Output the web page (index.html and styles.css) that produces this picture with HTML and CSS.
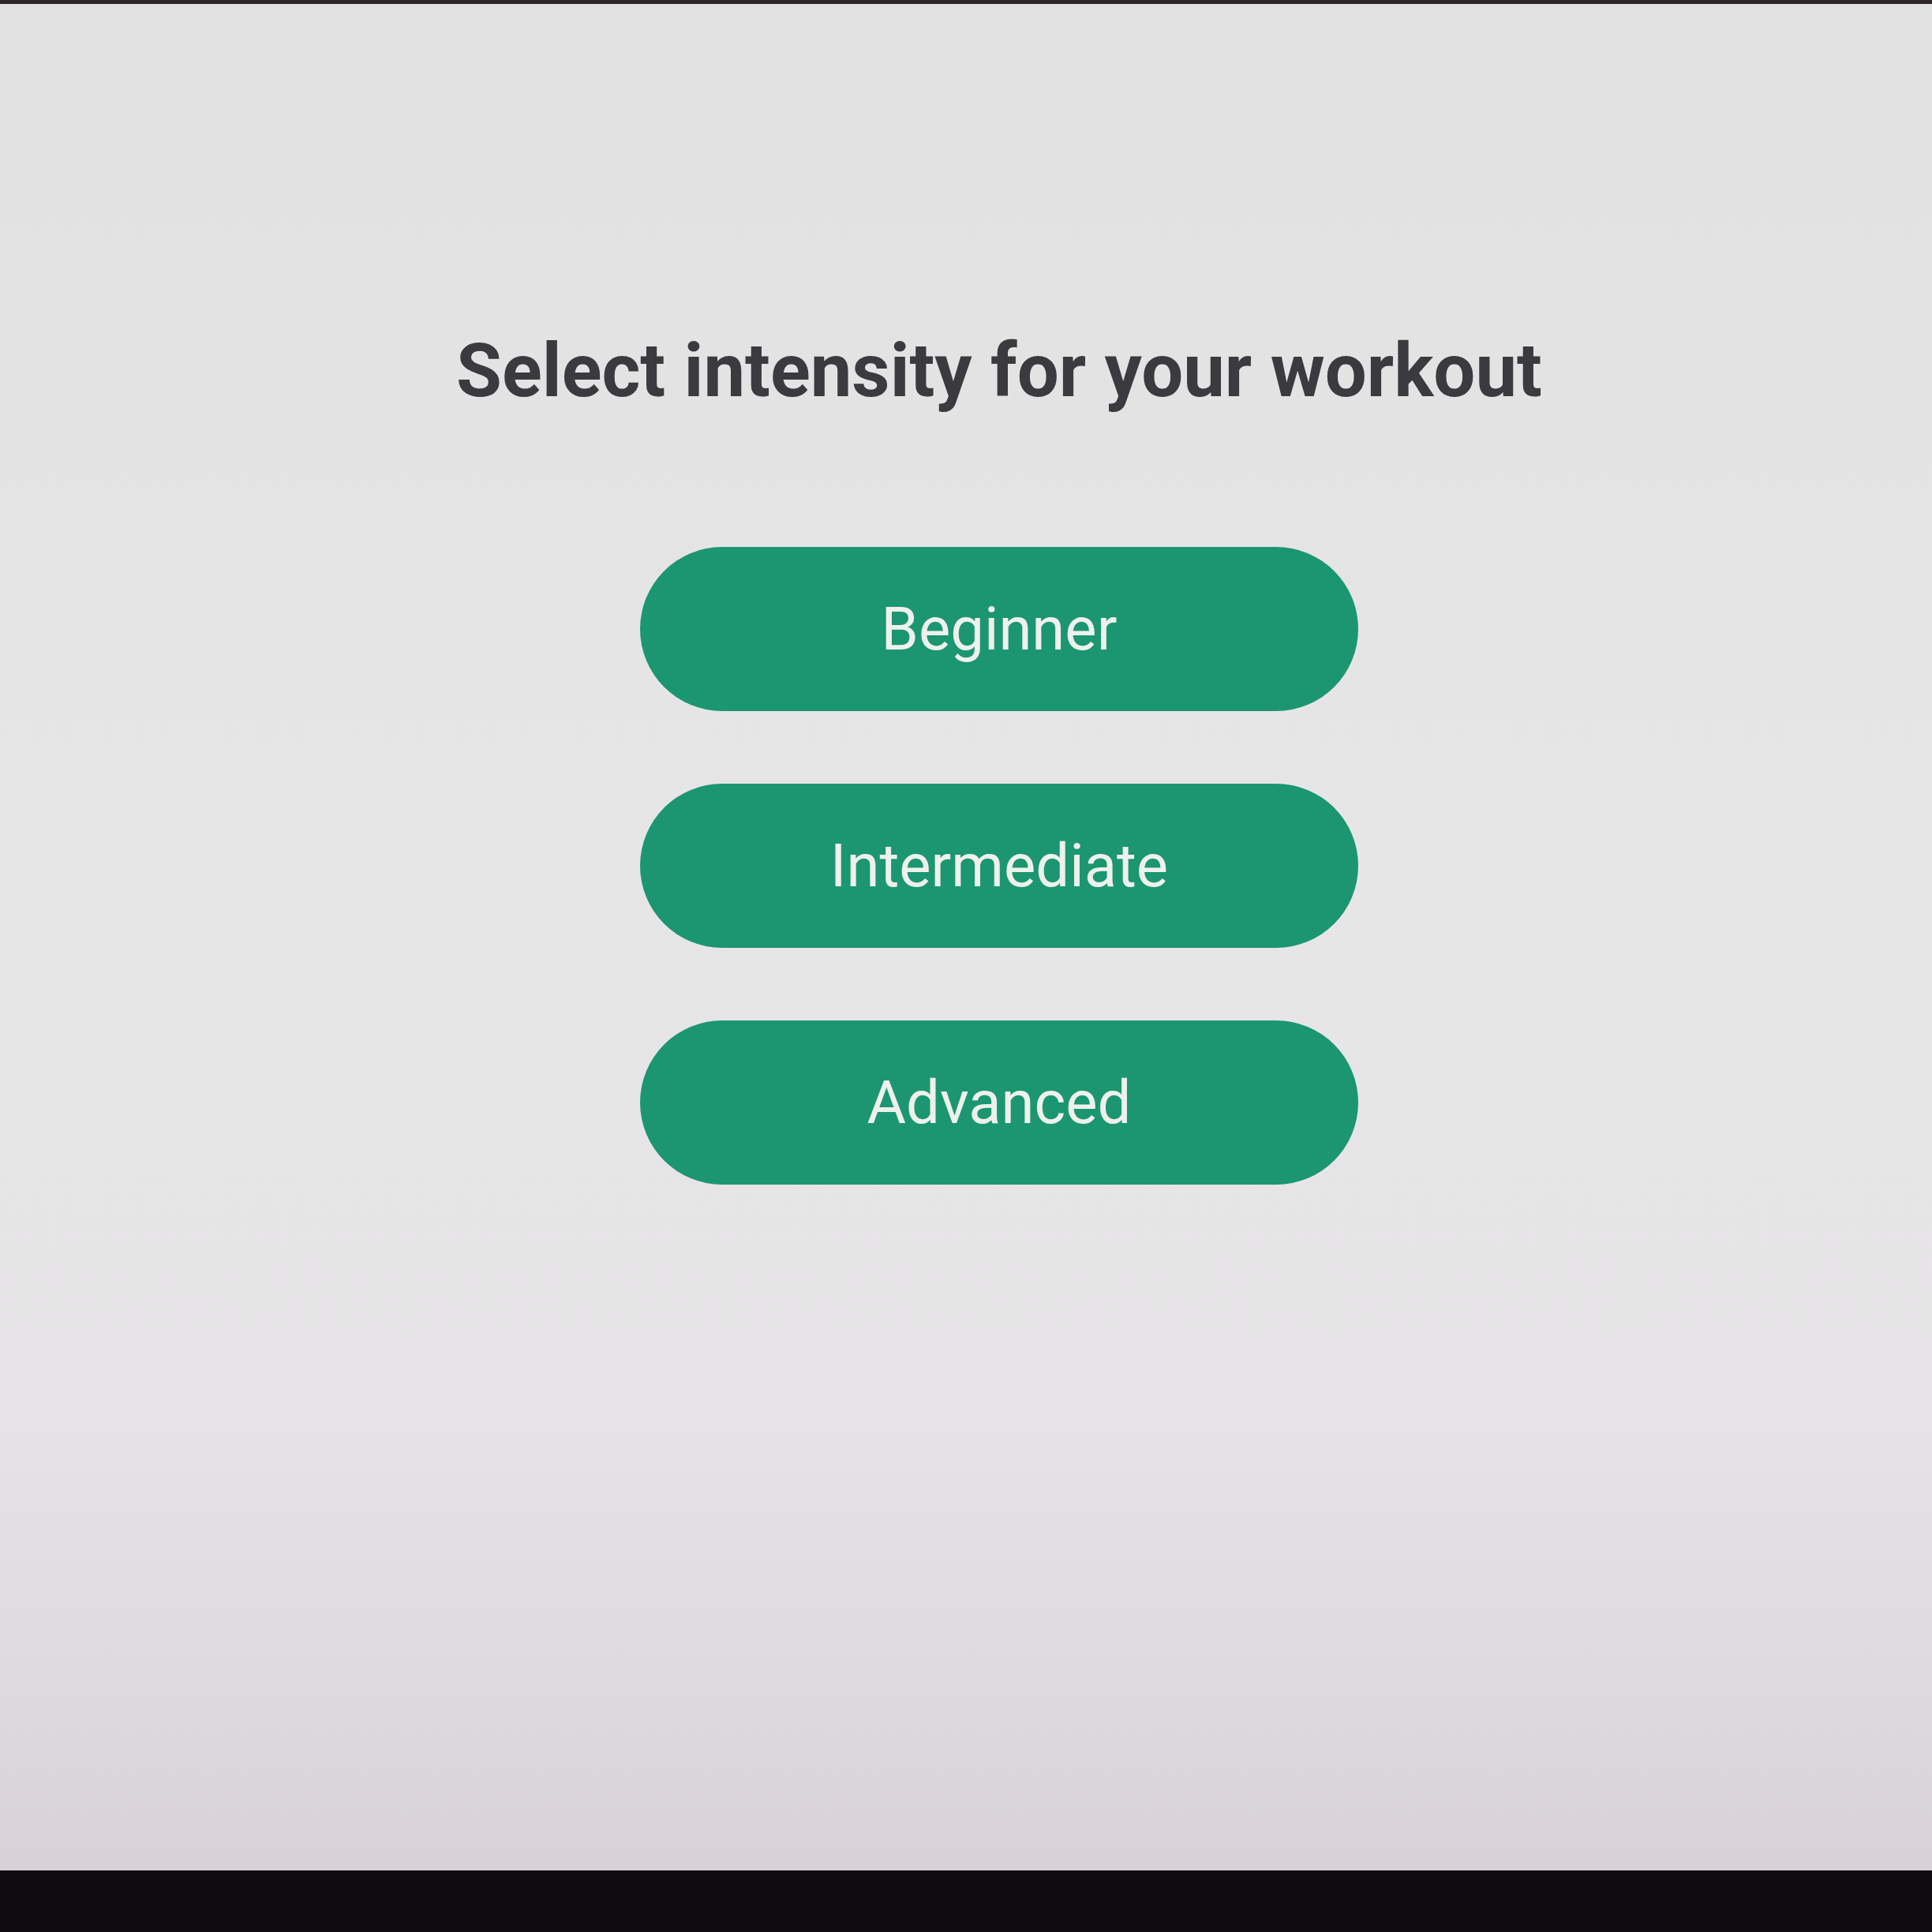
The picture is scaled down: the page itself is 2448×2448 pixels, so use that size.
FILE: index.html
```html
<!DOCTYPE html>
<html lang="en">
<head>
<meta charset="utf-8">
<title>Select intensity</title>
<link rel="stylesheet" href="styles.css">
</head>
<body>
<div class="device">
  <div class="bezel-top"></div>
  <main class="screen">
    <h1 class="title">Select intensity for your workout</h1>
    <div class="options">
      <button class="option">Beginner</button>
      <button class="option">Intermediate</button>
      <button class="option">Advanced</button>
    </div>
  </main>
  <div class="bezel-bottom"></div>
</div>
</body>
</html>
```
FILE: styles.css
```css
html, body {
  margin: 0;
  padding: 0;
}
body {
  width: 2448px;
  height: 2448px;
  overflow: hidden;
  background: #0f0c10;
  font-family: Roboto, "Noto Sans", sans-serif;
}
.device {
  display: flex;
  flex-direction: column;
  height: 2448px;
}
.bezel-top {
  height: 5px;
  background: #2a2629;
  flex: none;
}
.screen {
  flex: none;
  height: 2365px;
  box-sizing: border-box;
  padding-top: 418px;
  padding-left: 84px;
  display: flex;
  flex-direction: column;
  align-items: center;
  background: linear-gradient(to bottom, #e2e1e2 0%, #e7e6e7 45%, #e6e4e6 75%, #d8d2d8 100%);
}
.title {
  margin: 0;
  font-size: 94px;
  line-height: 1;
  font-weight: 700;
  color: #3b3a3f;
  letter-spacing: 0;
}
.options {
  margin-top: 176px;
  display: flex;
  flex-direction: column;
  gap: 92px;
}
.option {
  width: 910px;
  height: 208px;
  border: none;
  border-radius: 104px;
  background: #1b9671;
  color: #eef1ec;
  font-family: Roboto, "Noto Sans", sans-serif;
  font-size: 76px;
  font-weight: 400;
  display: flex;
  align-items: center;
  justify-content: center;
  padding: 0;
}
.bezel-bottom {
  flex: 1;
  background: #0f0c10;
}
```
